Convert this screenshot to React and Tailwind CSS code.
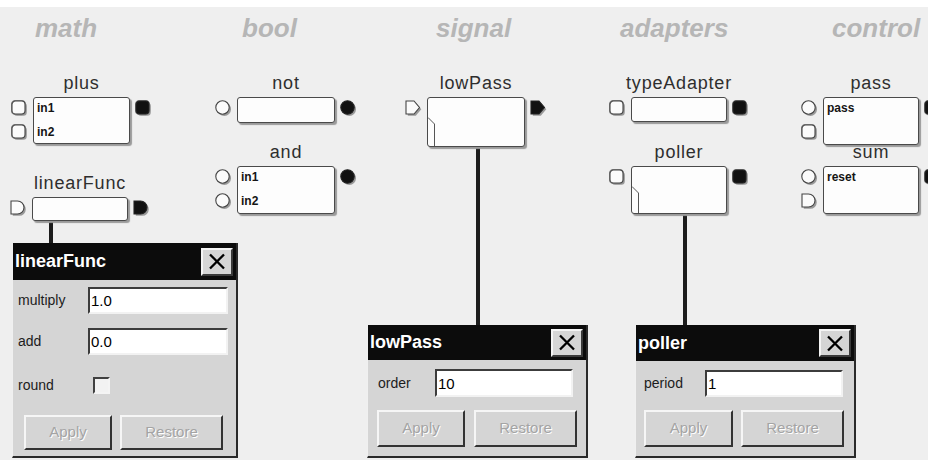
const SHAPES = {
  sq: "M4.5 1 H10.5 A3.5 3.5 0 0 1 14 4.5 V10.5 A3.5 3.5 0 0 1 10.5 14 H4.5 A3.5 3.5 0 0 1 1 10.5 V4.5 A3.5 3.5 0 0 1 4.5 1 Z",
  ci: "M7.5 0.8 A6.7 6.7 0 1 1 7.5 14.2 A6.7 6.7 0 1 1 7.5 0.8 Z",
  d: "M1 1 H7.5 A6.5 6.5 0 0 1 7.5 14 H1 Z",
  pe: "M1 1 H9 L14.5 7.5 L9 14 H1 Z",
};

function Port({ shape, out }) {
  const d = SHAPES[shape];
  return (
    <svg width="17" height="17" viewBox="0 0 17 17" className="block">
      <path d={d} transform="translate(1.8 1.8)" fill="#9a9a9a" />
      {shape === "sq" && <path d={d} fill="none" stroke="#8c8c8c" strokeWidth="2.4" />}
      <path d={d} fill={out ? "#111" : "#fbfbfb"} stroke={out ? "#222" : "#454545"} strokeWidth="1.1" />
    </svg>
  );
}

function Node({ pos, box, label, rows = [], ins, out, fold }) {
  return (
    <div className={`absolute flex flex-col items-center ${pos}`}>
      <div className="mb-[4px] h-[20px] whitespace-nowrap text-[18px] leading-[20px] tracking-[0.8px] text-[#2e2e2e]">
        {label}
      </div>
      <div className="flex items-start gap-[5px]">
        <div className="flex w-[17px] flex-col gap-[7px] pt-[3px]">
          {ins.map((s, i) => (
            <Port key={i} shape={s} />
          ))}
        </div>
        <div className={`relative overflow-hidden rounded-[3px] border border-[#4a4a4a] bg-[#fdfdfd] shadow-[2px_2px_1px_#9a9a9a] ${box}`}>
          <div className="flex flex-col gap-[8px] pt-[2px]">
            {rows.map((r) => (
              <div key={r} className="h-[16px] pl-[3px] text-[12px] font-bold leading-[16px] text-[#151515]">
                {r}
              </div>
            ))}
          </div>
          {fold && (
            <svg width="10" height="60" className="absolute left-0 top-0">
              <path d="M0 19.5 L6.5 26 V60" fill="none" stroke="#555" strokeWidth="1" />
            </svg>
          )}
        </div>
        <div className="flex w-[17px] flex-col pt-[3px]">
          <Port shape={out} out />
        </div>
      </div>
    </div>
  );
}

function Dialog({ pos, title, bar, children }) {
  return (
    <div className={`absolute flex flex-col border-l border-r-2 border-b-2 border-l-[#f0f0f0] border-r-[#2a2a2a] border-b-[#2a2a2a] bg-[#d5d5d5] ${pos}`}>
      <div className={`flex items-center justify-between bg-[#0c0c0c] pl-[2px] pr-[3px] ${bar}`}>
        <span className="text-[18px] font-bold text-white">{title}</span>
        <div className="flex h-[28px] w-[32px] items-center justify-center border-2 border-t-[#f4f4f4] border-l-[#f4f4f4] border-r-[#3a3a3a] border-b-[#3a3a3a] bg-[#d5d5d5]">
          <svg width="18" height="17" viewBox="0 0 18 17">
            <path d="M2 1.5 L16 15.5 M16 1.5 L2 15.5" stroke="#000" strokeWidth="2.3" />
          </svg>
        </div>
      </div>
      {children}
    </div>
  );
}

function Field({ value, size }) {
  return (
    <input
      readOnly
      value={value}
      className={`border-2 border-t-[#3c3c3c] border-l-[#3c3c3c] border-r-[#f2f2f2] border-b-[#f2f2f2] bg-white pl-[1px] text-[15px] text-black outline-none ${size}`}
    />
  );
}

function Btn({ children, size }) {
  return (
    <div className={`flex items-center justify-center border-2 border-t-[#f6f6f6] border-l-[#f6f6f6] border-r-[#333] border-b-[#333] bg-[#d5d5d5] text-[15px] text-[#a4a4a4] [text-shadow:1px_1px_0_#ffffff] ${size}`}>
      {children}
    </div>
  );
}

export default function App() {
  return (
    <div className="relative h-[460px] w-[928px] overflow-hidden bg-[#efefef] font-['Liberation_Sans',Arial,sans-serif]">
      <div className="h-[7px] bg-white" />

      {/* palette headers */}
      <div className="flex pl-[35px] pt-[6px] text-[26px] font-bold italic leading-[30px] text-[#b6b6b6]">
        <div className="w-[207px]">math</div>
        <div className="w-[194px]">bool</div>
        <div className="w-[184px]">signal</div>
        <div className="w-[212px]">adapters</div>
        <div>control</div>
      </div>

      {/* wires */}
      <div className="absolute left-[49px] top-[221px] h-[22px] w-[4px] bg-[#1c1c1c]" />
      <div className="absolute left-[476px] top-[147px] h-[178px] w-[4px] bg-[#1c1c1c]" />
      <div className="absolute left-[683px] top-[214px] h-[111px] w-[4px] bg-[#1c1c1c]" />

      {/* nodes */}
      <Node pos="left-[11px] top-[73px]" box="w-[97px] h-[47px]" label="plus" rows={["in1", "in2"]} ins={["sq", "sq"]} out="sq" />
      <Node pos="left-[10px] top-[173px]" box="w-[96px] h-[24px]" label="linearFunc" ins={["d"]} out="d" />
      <Node pos="left-[215px] top-[73px]" box="w-[98px] h-[26px]" label="not" ins={["ci"]} out="ci" />
      <Node pos="left-[215px] top-[142px]" box="w-[98px] h-[48px]" label="and" rows={["in1", "in2"]} ins={["ci", "ci"]} out="ci" />
      <Node pos="left-[405px] top-[73px]" box="w-[98px] h-[50px]" label="lowPass" ins={["pe"]} out="pe" fold />
      <Node pos="left-[609px] top-[73px]" box="w-[96px] h-[25px]" label="typeAdapter" ins={["sq"]} out="sq" />
      <Node pos="left-[609px] top-[142px]" box="w-[96px] h-[48px]" label="poller" ins={["sq"]} out="sq" fold />
      <Node pos="left-[801px] top-[73px]" box="w-[96px] h-[48px]" label="pass" rows={["pass"]} ins={["ci", "sq"]} out="sq" />
      <Node pos="left-[801px] top-[142px]" box="w-[96px] h-[48px]" label="sum" rows={["reset"]} ins={["ci", "d"]} out="sq" />

      {/* property dialogs */}
      <Dialog pos="left-[12px] top-[243px] w-[226px] h-[215px]" bar="h-[37px]" title="linearFunc">
        <div className="flex flex-col pl-[5px] pt-[7px] text-[14px] text-[#1c1c1c]">
          <div className="flex items-center">
            <span className="w-[70px]">multiply</span>
            <Field value="1.0" size="w-[140px] h-[27px]" />
          </div>
          <div className="mt-[14px] flex items-center">
            <span className="w-[70px]">add</span>
            <Field value="0.0" size="w-[140px] h-[27px]" />
          </div>
          <div className="mt-[20px] flex items-center">
            <span className="w-[75px]">round</span>
            <div className="h-[17px] w-[17px] border-2 border-t-[#404040] border-l-[#404040] border-r-[#f4f4f4] border-b-[#f4f4f4] bg-[#f2f2f2]" />
          </div>
          <div className="ml-[6px] mt-[19px] flex gap-[8px]">
            <Btn size="w-[88px] h-[35px]">Apply</Btn>
            <Btn size="w-[103px] h-[35px]">Restore</Btn>
          </div>
        </div>
      </Dialog>

      <Dialog pos="left-[367px] top-[325px] w-[221px] h-[133px]" bar="h-[35px]" title="lowPass">
        <div className="flex flex-col pl-[9px] pt-[9px] text-[14px] text-[#1c1c1c]">
          <div className="flex items-center">
            <span className="w-[58px] pl-[1px]">order</span>
            <Field value="10" size="w-[138px] h-[28px]" />
          </div>
          <div className="mt-[13px] flex gap-[9px]">
            <Btn size="w-[88px] h-[37px]">Apply</Btn>
            <Btn size="w-[103px] h-[37px]">Restore</Btn>
          </div>
        </div>
      </Dialog>

      <Dialog pos="left-[635px] top-[325px] w-[221px] h-[133px]" bar="h-[36px]" title="poller">
        <div className="flex flex-col pl-[8px] pt-[9px] text-[14px] text-[#1c1c1c]">
          <div className="flex items-center">
            <span className="w-[61px]">period</span>
            <Field value="1" size="w-[138px] h-[27px]" />
          </div>
          <div className="mt-[13px] flex gap-[8px]">
            <Btn size="w-[89px] h-[37px]">Apply</Btn>
            <Btn size="w-[103px] h-[37px]">Restore</Btn>
          </div>
        </div>
      </Dialog>
    </div>
  );
}
